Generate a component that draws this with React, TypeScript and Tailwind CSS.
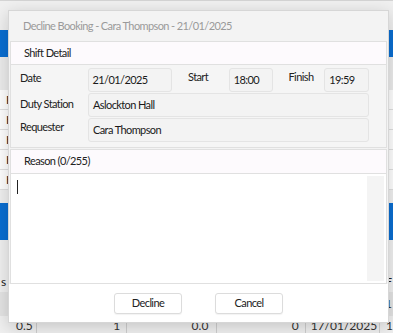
import React from 'react';

const font = { fontFamily: 'Lato, "Liberation Sans", sans-serif' };

const bgRows = [
  { l: 'R', r: '1' },
  { l: 'H', r: 'H' },
  { l: 'H', r: 'B' },
  { l: 'H', r: 'S' },
  { l: 'H', r: 'H' },
];

function FieldBox({ children, className = '' }: { children?: React.ReactNode; className?: string }) {
  return (
    <div className={`h-[24px] flex items-center px-[4px] bg-[#f3f3f3] border border-[#e4e4e4] rounded-[3px] text-[#1a1a1a] ${className}`}>
      {children}
    </div>
  );
}

export default function App() {
  return (
    <div className="relative w-[393px] h-[333px] overflow-hidden bg-[#f0f0f0] text-[11px] tracking-[-0.6px] whitespace-nowrap" style={font}>
      {/* Background page */}
      <div className="flex flex-col h-full border-t border-[#d4d4d4] text-[#222] text-[12px] tracking-normal">
        <div className="h-[29px] shrink-0" />
        <div className="h-[27px] shrink-0 bg-[#0a6ed1]" />
        <div className="h-[33px] shrink-0 bg-[#ececec]" />
        <div className="flex flex-col bg-white shrink-0">
          {bgRows.map((r, i) => (
            <div key={i} className="h-[20px] flex items-center justify-between px-[6px] border-b border-[#e0e0e0]">
              <span>{r.l}</span>
              <span>{r.r}</span>
            </div>
          ))}
        </div>
        <div className="h-[13px] shrink-0" />
        <div className="h-[37px] shrink-0 bg-[#0a6ed1]" />
        <div className="h-[34px] shrink-0" />
        <div className="h-[16px] shrink-0 flex items-center justify-between px-[1px]">
          <span>s i</span>
          <span>F</span>
        </div>
        <div className="h-[2px] shrink-0" />
        <div className="h-[24px] shrink-0 bg-[#e4e4e4] flex justify-end px-[1px] items-center">
          <span>1</span>
        </div>
        <div className="h-[3px] shrink-0" />
        <div className="flex items-start h-[14px] shrink-0 text-[12px] leading-[14px] text-[#333]">
          <div className="w-[37px] pl-[16px] border-r border-[#cfcfcf]">0.5</div>
          <div className="w-[91px] text-right pr-[6px] border-r border-[#cfcfcf]">1</div>
          <div className="w-[91px] text-right pr-[8px] border-r border-[#cfcfcf]">0.0</div>
          <div className="w-[89px] text-right pr-[6px] border-r border-[#cfcfcf]">0</div>
          <div className="w-[75px] pl-[5px] border-r border-[#cfcfcf]">17/01/2025</div>
          <div className="pl-[6px]">1</div>
        </div>
      </div>

      {/* Dialog */}
      <div className="absolute left-[8px] top-[10px] w-[381px] h-[313px] bg-[#f3f3f3] border border-[#d6d6d6] shadow-[0_4px_16px_rgba(0,0,0,0.18)] flex flex-col">
        <div className="h-[30px] flex items-center pl-[14px] pt-[1px] text-[#9a9a9a]">
          Decline Booking - Cara Thompson - 21/01/2025
        </div>
        <div className="mx-[1px] flex flex-col">
          <div className="h-[24px] flex items-center pl-[13px] bg-[#fdfafd] border border-[#e0e0e0] text-[#222]">
            Shift Detail
          </div>
          <div className="h-[83px] bg-[#f5f5f5] border-x border-b border-[#e0e0e0] pt-[3px] pl-[9px] pr-[17px] flex flex-col gap-[1px]">
            <div className="flex items-start">
              <div className="w-[68px] pt-[2px] text-[#222]">Date</div>
              <FieldBox className="w-[85px]">21/01/2025</FieldBox>
              <div className="w-[57px] pl-[16px] pt-[1px] text-[#222]">Start</div>
              <FieldBox className="w-[44px]">18:00</FieldBox>
              <div className="w-[52px] pl-[16px] pt-[1px] text-[#222]">Finish</div>
              <FieldBox className="w-[45px]">19:59</FieldBox>
            </div>
            <div className="flex items-start">
              <div className="w-[68px] pt-[3px] text-[#222]">Duty Station</div>
              <FieldBox className="flex-1 h-[22px]">Aslockton Hall</FieldBox>
            </div>
            <div className="flex items-start">
              <div className="w-[68px] pt-[1px] text-[#222]">Requester</div>
              <FieldBox className="flex-1">Cara Thompson</FieldBox>
            </div>
          </div>
          <div className="mt-[1px] h-[25px] flex items-center pl-[13px] bg-[#fdfafd] border border-[#e0e0e0] text-[#222]">
            Reason (0/255)
          </div>
          <div className="h-[110px] bg-white border-x border-b border-[#e0e0e0] flex pt-[2px] pb-[2px]">
            <div className="flex-1 pl-[6px] pt-[4px]">
              <div className="w-[1px] h-[14px] bg-[#222]" />
            </div>
            <div className="w-[17px] mr-[2px] bg-[#f4f4f4]" />
          </div>
        </div>
        <div className="flex-1 bg-white flex items-start justify-center gap-[33px] pt-[9px]">
          <button className="w-[68px] h-[21px] bg-white border border-[#dcdcdc] rounded-[3px] text-[#222] shadow-[0_1px_1px_rgba(0,0,0,0.05)]">
            Decline
          </button>
          <button className="w-[68px] h-[21px] bg-white border border-[#dcdcdc] rounded-[3px] text-[#222] shadow-[0_1px_1px_rgba(0,0,0,0.05)]">
            Cancel
          </button>
        </div>
      </div>
    </div>
  );
}
